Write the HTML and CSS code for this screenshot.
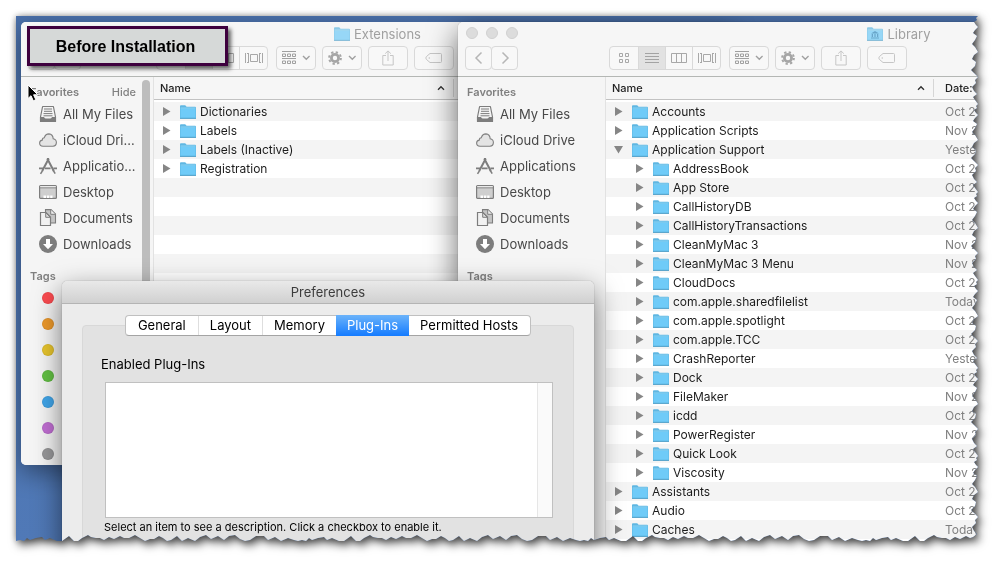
FILE: index.html
```html
<!DOCTYPE html>
<html lang="en">
<head>
<meta charset="utf-8">
<title>Before Installation</title>
<link rel="stylesheet" href="styles.css">
</head>
<body>
<svg class="sprite" aria-hidden="true">
  <symbol id="folder" viewBox="0 0 16 14">
    <path d="M0 1.2Q0 .3.9.3H5.2L6.6 1.8H15.1Q16 1.8 16 2.7V13.5H0Z" fill="#5fb7e2"/>
    <path d="M.5 3.6H15.5V12.6H.5Z" fill="#6fcbf8"/>
    <path d="M0 13.2H16V14H0Z" fill="#4a9bc6"/>
    <path d="M.6 3H15.4" stroke="#9bdcfa" stroke-width=".8"/>
  </symbol>
  <symbol id="library" viewBox="0 0 16 14">
    <use href="#folder" width="16" height="14"/>
    <path d="M8 4 12 6.4H4ZM4.7 7H6v3H4.7ZM7.4 7h1.2v3H7.4ZM10 7h1.3v3H10ZM4 10.4h8v1H4Z" fill="#2f85b8"/>
  </symbol>
  <symbol id="allfiles" viewBox="0 0 18 18">
    <path d="M3.600 1.500H14.400L16.500 12V16.500H1.500V12Z" fill="#f4f4f4" stroke="#7d7d7d" stroke-width="1.200" stroke-linejoin="round"/>
    <path d="M1.500 12.500H5L6 14H12L13 12.500H16.500V16.500H1.500Z" fill="#7d7d7d" stroke="#7d7d7d"/>
    <path d="M5 4H13M5 6.300H13M4.500 8.600H13.500M4.500 10.800H13.500" stroke="#7d7d7d"/>
  </symbol>
  <symbol id="cloud" viewBox="0 0 18 18">
    <path d="M4 15.200Q.6 15 .6 12 .8 9.400 3.300 9.100 3.200 6.900 5.300 6.700 6.500 2.900 10 2.900 13.800 3.200 14.200 7.700 17.400 8.300 17.400 11.600 17.200 15 14 15.200Z" fill="#e4e4e4" stroke="#808080" stroke-width="1.100"/>
  </symbol>
  <symbol id="apps" viewBox="0 0 18 18">
    <path d="M9.800 1.500 3.200 14M8.200 1.500 14.800 14" stroke="#7d7d7d" stroke-width="2" fill="none"/>
    <path d="M14 13 16.200 16.600M3.400 14 1.500 16.800" stroke="#7d7d7d" stroke-width="1.500"/>
    <path d="M0 11.300H4M6 11.300H11.600M14.400 11.300H18" stroke="#7d7d7d" stroke-width="1.700"/>
  </symbol>
  <symbol id="desktop" viewBox="0 0 18 18">
    <rect x=".6" y="2.600" width="16.800" height="12.800" rx="1" fill="#cfcfcf" stroke="#7d7d7d" stroke-width="1.200"/>
    <path d="M1 4.800H17" stroke="#7d7d7d"/><path d="M1.200 3.700H16.800" stroke="#f5f5f5"/>
    <path d="M4.500 12.500H7V15H4.500ZM7.900 12.500H10.300V15H7.900ZM11.200 12.500H13.500V15H11.200Z" fill="#fff"/>
  </symbol>
  <symbol id="docs" viewBox="0 0 18 18">
    <path d="M6.500 .6H12L16.500 5V14H6.500Z" fill="#c4c4c4" stroke="#7d7d7d" stroke-width="1.100"/>
    <path d="M11.700 .8V5.300H16.300" fill="#eee" stroke="#7d7d7d"/>
    <path d="M1.500 3.500H7L11.500 8V16.500H1.500Z" fill="#f1f1f1" stroke="#7d7d7d" stroke-width="1.200"/>
    <path d="M6.700 3.700V8.300H11.300Z" fill="#ddd" stroke="#7d7d7d"/>
  </symbol>
  <symbol id="downloads" viewBox="0 0 18 18">
    <circle cx="9" cy="9" r="9" fill="#7d7d7d"/>
    <path d="M7 4H11V9H14L9 14.300 4 9H7Z" fill="#fff"/>
  </symbol>
  <symbol id="back" viewBox="0 0 12 14"><path d="M8.500 1.500 3 7 8.500 12.500" fill="none" stroke="#b6b6b6" stroke-width="1.500"/></symbol>
  <symbol id="forward" viewBox="0 0 12 14"><path d="M3.500 1.500 9 7 3.500 12.500" fill="none" stroke="#b6b6b6" stroke-width="1.500"/></symbol>
  <symbol id="v-icons" viewBox="0 0 18 12"><path d="M4.500 1.500h3v3h-3ZM10.500 1.500h3v3h-3ZM4.500 7.500h3v3h-3ZM10.500 7.500h3v3h-3Z" fill="none" stroke="#a8a8a8"/></symbol>
  <symbol id="v-list" viewBox="0 0 18 12"><path d="M2 1.500H16M2 4.500H16M2 7.500H16M2 10.500H16" stroke="#a3a3a3"/></symbol>
  <symbol id="v-columns" viewBox="0 0 18 12"><path d="M1.500 1.500h15v9h-15ZM6.500 1.500v9M11.500 1.500v9" fill="none" stroke="#a8a8a8"/></symbol>
  <symbol id="v-flow" viewBox="0 0 18 12"><path d="M5.500 2.500h7v7h-7ZM.5 1v10M3.500 1v10M14.500 1v10M17.500 1v10M2 1.500h1.500M2 10.500h1.500M14.500 1.500H16M14.500 10.500H16" fill="none" stroke="#a8a8a8"/></symbol>
  <symbol id="group" viewBox="0 0 28 14"><path d="M0 .5H14M0 7.500H14M.5 3h3v2.500h-3ZM5.500 3h3v2.500h-3ZM10.500 3h3v2.500h-3ZM.5 10h3v2.500h-3ZM5.500 10h3v2.500h-3ZM10.500 10h3v2.500h-3Z" fill="none" stroke="#a0a0a0"/><path d="M21 5 24.300 8.300 27.600 5" fill="none" stroke="#a0a0a0" stroke-width="1.400"/></symbol>
  <symbol id="gear" viewBox="0 0 28 14"><circle cx="7" cy="7" r="3.600" fill="none" stroke="#a6a6a6" stroke-width="2.800"/><circle cx="7" cy="7" r="5.900" fill="none" stroke="#a6a6a6" stroke-width="2" stroke-dasharray="2.300 2.334"/><path d="M21 5 24.300 8.300 27.600 5" fill="none" stroke="#a0a0a0" stroke-width="1.400"/></symbol>
  <symbol id="share" viewBox="0 0 12 16"><path d="M4 5.500H.8V15H11.200V5.500H8M6 11V1M3.200 3.600 6 .9 8.800 3.600" fill="none" stroke="#c6c6c6"/></symbol>
  <symbol id="tag" viewBox="0 0 18 12"><path d="M5 1.500H15.500Q16.500 1.500 16.500 2.500V9.500Q16.500 10.500 15.500 10.500H5L1.300 7.300Q.3 6 1.300 4.700Z" fill="none" stroke="#c6c6c6"/><circle cx="4.300" cy="6" r=".8" fill="#c6c6c6"/></symbol>
  <symbol id="closed" viewBox="0 0 9 9"><path d="M1 0 8.500 4.500 1 9Z" fill="#868686"/></symbol>
  <symbol id="open" viewBox="0 0 9 9"><path d="M0 1H9L4.500 8.500Z" fill="#868686"/></symbol>
  <symbol id="sort" viewBox="0 0 8 6"><path d="M1 4.800 4 1.800 7 4.800" fill="none" stroke="#333" stroke-width="1.400"/></symbol>
</svg>

<div class="sheet">
  <main class="desktop" id="desktop-area">
    <section class="window finder extensions" aria-label="Extensions">
      <header class="chrome">
        <div class="title"><svg class="folder"><use href="#folder"/></svg>Extensions</div>
        <div class="toolbar"></div>
      </header>
      <div class="content">
        <nav class="sidebar">
          <div class="heading"><span>Favorites</span><button class="hide">Hide</button></div>
          <ul class="places">
            <li><a href="#"><svg><use href="#allfiles"/></svg>All My Files</a></li>
            <li><a href="#"><svg><use href="#cloud"/></svg>iCloud Dri…</a></li>
            <li><a href="#"><svg><use href="#apps"/></svg>Applicatio…</a></li>
            <li><a href="#"><svg><use href="#desktop"/></svg>Desktop</a></li>
            <li><a href="#"><svg><use href="#docs"/></svg>Documents</a></li>
            <li><a href="#"><svg><use href="#downloads"/></svg>Downloads</a></li>
          </ul>
          <div class="heading">Tags</div>
          <ul class="tags">
            <li class="red"></li><li class="orange"></li><li class="yellow"></li><li class="green"></li><li class="blue"></li><li class="purple"></li><li class="gray"></li>
          </ul>
          <div class="scrollbar"></div>
        </nav>
        <div class="listing">
          <table>
            <thead><tr><th class="name"><span>Name<svg><use href="#sort"/></svg></span></th><th></th></tr></thead>
            <tbody id="extensions-rows"></tbody>
          </table>
        </div>
      </div>
    </section>

    <section class="window finder library" aria-label="Library">
      <header class="chrome">
        <div class="lights"><i></i><i></i><i></i></div>
        <div class="title"><svg class="folder"><use href="#library"/></svg>Library</div>
        <div class="toolbar"></div>
      </header>
      <div class="content">
        <nav class="sidebar">
          <div class="heading">Favorites</div>
          <ul class="places">
            <li><a href="#"><svg><use href="#allfiles"/></svg>All My Files</a></li>
            <li><a href="#"><svg><use href="#cloud"/></svg>iCloud Drive</a></li>
            <li><a href="#"><svg><use href="#apps"/></svg>Applications</a></li>
            <li><a href="#"><svg><use href="#desktop"/></svg>Desktop</a></li>
            <li><a href="#"><svg><use href="#docs"/></svg>Documents</a></li>
            <li><a href="#"><svg><use href="#downloads"/></svg>Downloads</a></li>
          </ul>
          <div class="heading">Tags</div>
        </nav>
        <div class="listing">
          <table>
            <thead><tr><th class="name"><span>Name<svg><use href="#sort"/></svg></span></th><th class="date">Date:</th></tr></thead>
            <tbody id="library-rows"></tbody>
          </table>
        </div>
      </div>
    </section>

    <section class="window preferences" aria-label="Preferences">
      <h2>Preferences</h2>
      <div class="prefs-body">
        <div class="tabs" role="tablist">
          <button role="tab">General</button><button role="tab">Layout</button><button role="tab">Memory</button><button role="tab" aria-selected="true">Plug-Ins</button><button role="tab">Permitted Hosts</button>
        </div>
        <div class="panel" role="tabpanel">
          <p class="caption" id="plugins-label">Enabled Plug-Ins</p>
          <div class="plugins" role="listbox" aria-labelledby="plugins-label"><div class="gutter"></div></div>
          <p class="hint">Select an item to see a description. Click a checkbox to enable it.</p>
        </div>
      </div>
    </section>

    <div class="banner">Before Installation</div>
    <svg class="pointer" viewBox="0 0 12 18"><path d="M1 1V14.500L4 11.700 6.300 16.800 8.800 15.700 6.600 10.800H10.800Z" fill="#000" stroke="#fff"/></svg>
  </main>
</div>
<script src="script.js"></script>
</body>
</html>
```
FILE: styles.css
```css
* { box-sizing: border-box; }
body { margin: 0; background: #fff; font-family: Inter, "Liberation Sans", sans-serif; font-size: 12px; color: #1c1c1c; overflow: hidden; }
button { font: inherit; color: inherit; background: none; border: 0; padding: 0; margin: 0; }
ul { list-style: none; margin: 0; padding: 0; }
svg { display: block; flex: none; }
.sprite { position: absolute; width: 0; height: 0; }

.sheet { height: 100vh; padding: 16px 22px 23px 16px; filter: drop-shadow(0 0 3px rgba(0,0,0,.3)) drop-shadow(3px 4px 4px rgba(0,0,0,.65)); }
.desktop { position: relative; height: 100%; overflow: hidden; background: linear-gradient(#4a70aa, #5079b7); }

.window { position: absolute; background: #f6f6f6; border-radius: 5px; display: flex; flex-direction: column; }
.finder { overflow: hidden; }
.extensions { left: 5px; top: 6px; width: 713px; height: 443px; box-shadow: 0 8px 24px rgba(0,0,0,.4); --nav-gap: 76px; --side: 133px; --col: 302px; }
.library { left: 442px; top: 6px; width: 882px; height: 560px; box-shadow: 0 10px 30px rgba(0,0,0,.6), 0 0 1px rgba(0,0,0,.5); --nav-gap: 92px; --side: 148px; --col: 330px; }

.chrome { position: relative; height: 55px; flex: none; border-bottom: 1px solid #b4b7b4; background: #f6f6f6; }
.title { height: 24px; display: flex; justify-content: center; align-items: center; gap: 4px; font-size: 13px; color: #a0a0a0; }
.title .folder { opacity: .7; }
.folder { width: 16px; height: 14px; }
.lights { position: absolute; left: 8px; top: 5px; display: flex; gap: 8px; }
.lights i { width: 12px; height: 12px; border-radius: 50%; background: #dcdcdc; border: 1px solid #d0d0d0; }
.toolbar { display: flex; padding-left: 7px; gap: 6px; }
.toolbar button { height: 24px; display: flex; align-items: center; justify-content: center; border: 1px solid #d9d9d9; border-radius: 4px; background: #f8f8f8; }
.nav { display: flex; margin-right: calc(var(--nav-gap) - 7px); }
.toolbar .nav button { width: 27px; }
.nav button + button { margin-left: -1px; }
.nav svg { width: 12px; height: 14px; }
.views { display: flex; margin-right: 2px; }
.toolbar .views button { width: 28px; border-radius: 0; margin-right: -1px; }
.toolbar .views button:first-child { width: 30px; border-radius: 4px 0 0 4px; }
.toolbar .views button:last-child { width: 29px; border-radius: 0 4px 4px 0; margin-right: 0; }
.toolbar .views .on { background: #e2e2e2; }
.views svg, .tag svg { width: 18px; height: 12px; }
.toolbar .wide { width: 40px; }
.menu svg { width: 28px; height: 14px; }
.share svg { width: 12px; height: 16px; }

.content { flex: 1; display: flex; min-height: 0; }
.sidebar { position: relative; width: var(--side); flex: none; border-right: 1px solid #e2e2e2; background: #f5f5f5; }
.heading { display: flex; justify-content: space-between; height: 24px; padding: 7px 17px 0 9px; font-size: 11px; line-height: 16px; font-weight: 600; color: #808080; }
.hide { height: 16px; font-weight: 500; }
.places { margin-bottom: 4px; }
.places a { display: flex; align-items: center; gap: 6px; height: 26px; padding-left: 18px; font-size: 13px; color: #484848; text-decoration: none; white-space: nowrap; }
.places svg { width: 18px; height: 18px; }
.tags { padding-top: 4px; }
.tags li { width: 12px; height: 12px; margin: 3px 0 14px 21px; border-radius: 50%; border: 1px solid rgba(0,0,0,.06); }
.red { background: #fc4b50; } .orange { background: #ee9a2b; } .yellow { background: #e8c52d; } .green { background: #63c244; }
.blue { background: #41a6ea; } .purple { background: #c26fd4; } .gray { background: #98989a; }
.scrollbar { position: absolute; right: 3px; top: 3px; bottom: 3px; width: 8px; border-radius: 4px; background: #bdbdbd; }

.listing { flex: 1; min-width: 0; background: repeating-linear-gradient(#f4f4f4 0 19px, #fff 19px 38px) 0 25px / 100% 38px; }
.listing table { width: 100%; table-layout: fixed; border-collapse: separate; border-spacing: 0; }
.listing th { height: 23px; padding: 0; border-bottom: 1px solid #c2c2c2; background: #f6f6f6; text-align: left; font-size: 11px; font-weight: 500; color: #222; }
.listing .name { width: var(--col); background: linear-gradient(#d6d6d6, #d6d6d6) right 2px center / 1px 18px no-repeat #f6f6f6; }
.name span { display: flex; align-items: center; justify-content: space-between; padding: 0 11px 0 6px; }
.name svg { width: 8px; height: 6px; }
.listing .date, .listing td:last-child { padding-left: 9px; }
.listing tbody::before { content: ""; display: block; height: 2px; }
.listing td { height: 19px; padding: 0; color: #1c1c1c; white-space: nowrap; }
.listing td:last-child { color: #808080; }
.entry { display: flex; align-items: center; padding-left: 8px; height: 19px; }
.entry.child { padding-left: 29px; }
.entry button { width: 9px; height: 9px; margin-right: 9px; }
.entry button svg { width: 9px; height: 9px; }
.entry .folder { margin-right: 4px; }

.preferences { left: 46px; top: 265px; width: 532px; height: 320px; background: #ececec; box-shadow: 0 10px 28px rgba(0,0,0,.55), 0 0 1px rgba(0,0,0,.5); }
.preferences h2 { margin: 0; height: 23px; border-bottom: 1px solid #b4b4b4; border-radius: 5px 5px 0 0; background: linear-gradient(#e9e9e9, #d0d0d0); text-align: center; font-size: 13px; line-height: 23px; font-weight: 400; color: #3c3c3c; }
.prefs-body { flex: 1; display: flex; flex-direction: column; padding: 11px 20px 0; }
.tabs { display: flex; align-self: center; height: 21px; margin-bottom: -11px; z-index: 1; border: 1px solid #c0c0c0; border-bottom-color: #a4a4a4; border-radius: 4px; background: #fff; font-size: 13px; color: #000; }
.tabs button { padding: 0 11px; border-left: 1px solid #dedede; white-space: nowrap; line-height: 19px; }
.tabs button:first-child { border-left: 0; padding: 0 12px; }
.tabs [aria-selected] { margin: -1px 0; border-left: 0; background: linear-gradient(#6bb3fa, #147bff); color: #fff; }
.tabs [aria-selected] + button { border-left: 0; padding-right: 12px; }
.panel { flex: 1; padding: 30px 20px 0 18px; border: 1px solid #d8d8d8; border-radius: 4px; background: #e2e2e2; color: #000; }
.panel p { margin: 0; line-height: 16px; }
.panel .caption { padding-bottom: 10px; font-size: 13px; }
.plugins { display: flex; justify-content: flex-end; height: 136px; margin-left: 4px; border: 1px solid #c0c0c0; background: #fff; }
.gutter { width: 15px; border-left: 1px solid #e6e6e6; background: #fafafa; }
.panel .hint { padding: 1px 0 0 3px; font-size: 11px; }

.banner { position: absolute; left: 11px; top: 10px; width: 201px; height: 40px; padding-right: 4px; border: 3px solid #3e003e; background: #d6d9d8; box-shadow: 3px 3px 4px rgba(0,0,0,.6); font: bold 16px/36px "Liberation Sans", sans-serif; color: #000; text-align: center; }
.pointer { position: absolute; left: 11px; top: 68px; width: 12px; height: 18px; }
```
FILE: script.js
```js
const icon = (id, cls = "") => `<svg class="${cls}"><use href="#${id}"/></svg>`;

for (const bar of document.querySelectorAll(".toolbar")) {
  bar.innerHTML = `
    <div class="nav"><button aria-label="Back">${icon("back")}</button><button aria-label="Forward">${icon("forward")}</button></div>
    <div class="views"><button aria-label="Icons">${icon("v-icons")}</button><button class="on" aria-label="List">${icon("v-list")}</button><button aria-label="Columns">${icon("v-columns")}</button><button aria-label="Cover Flow">${icon("v-flow")}</button></div>
    <button class="wide menu" aria-label="Arrange">${icon("group")}</button>
    <button class="wide menu" aria-label="Action">${icon("gear")}</button>
    <button class="wide share" aria-label="Share">${icon("share")}</button>
    <button class="wide tag" aria-label="Tags">${icon("tag")}</button>`;
}

// Each row: [name, date, depth, open]
const extensions = [["Dictionaries"], ["Labels"], ["Labels (Inactive)"], ["Registration"]];
const library = [
  ["Accounts", "Oct 2"], ["Application Scripts", "Nov 2"], ["Application Support", "Yeste", 0, true],
  ["AddressBook", "Oct 2", 1], ["App Store", "Oct 2", 1], ["CallHistoryDB", "Oct 2", 1],
  ["CallHistoryTransactions", "Oct 2", 1], ["CleanMyMac 3", "Nov 2", 1], ["CleanMyMac 3 Menu", "Nov 2", 1],
  ["CloudDocs", "Oct 2", 1], ["com.apple.sharedfilelist", "Today", 1], ["com.apple.spotlight", "Oct 2", 1],
  ["com.apple.TCC", "Oct 2", 1], ["CrashReporter", "Yeste", 1], ["Dock", "Oct 2", 1],
  ["FileMaker", "Nov 2", 1], ["icdd", "Oct 2", 1], ["PowerRegister", "Nov 2", 1],
  ["Quick Look", "Oct 2", 1], ["Viscosity", "Nov 2", 1], ["Assistants", "Oct 2"],
  ["Audio", "Oct 2"], ["Caches", "Today"]
];
const row = ([name, date = "", depth = 0, open = false]) =>
  `<tr><td><div class="entry${depth ? " child" : ""}"><button aria-label="Toggle ${name}">${icon(open ? "open" : "closed")}</button>${icon("folder", "folder")}${name}</div></td><td>${date}</td></tr>`;
document.getElementById("extensions-rows").innerHTML = extensions.map(row).join("");
document.getElementById("library-rows").innerHTML = library.map(row).join("");

// Torn paper outline: [distance along the edge, depth of the tear]
const rightTear = [[0,1],[2,3],[4,2],[6,5],[9,3],[11,1],[14,4],[17,6],[20,2],[24,4],[28,7],[31,4],[36,1],[39,5],[43,7],[46,3],[50,4],[54,8],[57,5],[61,1],[64,4],[67,3],[71,7],[75,5],[78,2],[81,6],[84,4]];
const bottomTear = [[0,1],[4,2],[8,1],[11,4],[14,2],[20,4],[26,5],[29,2],[34,4],[41,1],[46,1],[53,6],[58,1],[62,1],[66,4],[72,7],[75,5],[80,4],[84,4],[88,2],[93,5],[98,3],[104,6],[108,4],[113,4],[119,7],[124,4],[129,1],[134,3],[138,3],[143,6],[147,4],[151,1],[155,2],[161,6],[166,1],[172,4],[179,1],[184,5],[190,7],[195,3],[202,6],[208,2],[213,6],[219,7],[224,3],[229,1],[234,2],[240,6],[248,6],[252,2],[259,5],[265,1],[272,4],[278,2]];
const area = document.getElementById("desktop-area");
function along(tear, length) {
  const period = tear[tear.length - 1][0] + 4;
  const points = [];
  for (let start = 0; start < length; start += period)
    for (const [at, depth] of tear) if (start + at < length - 4) points.push([start + at, depth]);
  return points;
}
function tearEdges() {
  const w = area.clientWidth, h = area.clientHeight;
  const right = along(rightTear, h).map(([y, d]) => `${w - d}px ${y}px`);
  const bottom = along(bottomTear, w).map(([x, d]) => `${x}px ${h - d}px`).reverse();
  area.style.clipPath = `polygon(0 0, ${right.join(",")}, ${bottom.join(",")})`;
}
tearEdges();
addEventListener("resize", tearEdges);
```
